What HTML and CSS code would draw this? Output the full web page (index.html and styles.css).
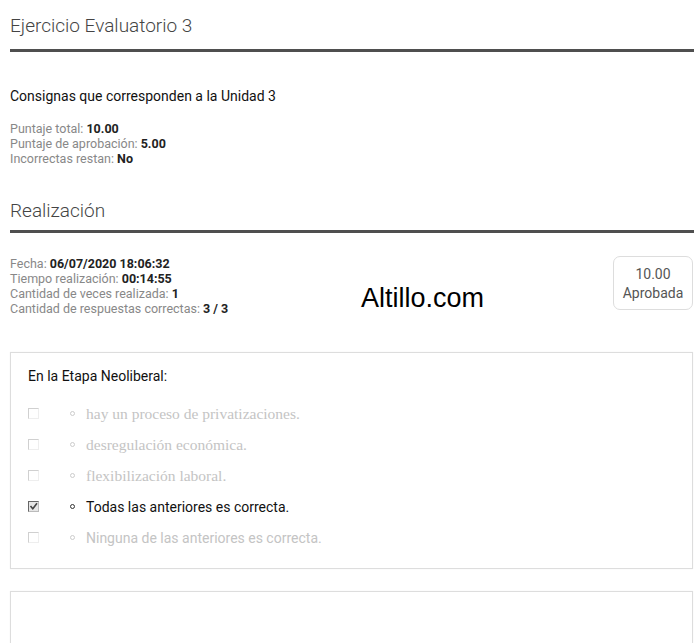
FILE: index.html
```html
<!DOCTYPE html>
<html lang="es">
<head>
    <meta charset="UTF-8">
    <meta name="viewport" content="width=device-width, initial-scale=1.0">
    <title>Ejercicio Evaluatorio 3</title>
    <link rel="stylesheet" href="styles.css">
</head>
<body>
    <div class="page">
        <h1 class="section-title">Ejercicio Evaluatorio 3</h1>

        <p class="consigna">Consignas que corresponden a la Unidad 3</p>
        <div class="info">
            <div>Puntaje total: <b>10.00</b></div>
            <div>Puntaje de aprobación: <b>5.00</b></div>
            <div>Incorrectas restan: <b>No</b></div>
        </div>

        <h2 class="section-title">Realización</h2>

        <div class="result">
            <div class="info">
                <div>Fecha: <b>06/07/2020 18:06:32</b></div>
                <div>Tiempo realización: <b>00:14:55</b></div>
                <div>Cantidad de veces realizada: <b>1</b></div>
                <div>Cantidad de respuestas correctas: <b>3 / 3</b></div>
            </div>
            <div class="badge">10.00<br>Aprobada</div>
            <span class="watermark">Altillo.com</span>
        </div>

        <div class="card">
            <h3>En la Etapa Neoliberal:</h3>
            <ul class="options">
                <li class="off serif"><span class="chk"></span><span class="dot"></span>hay un proceso de privatizaciones.</li>
                <li class="off serif"><span class="chk"></span><span class="dot"></span>desregulación económica.</li>
                <li class="off serif"><span class="chk"></span><span class="dot"></span>flexibilización laboral.</li>
                <li class="on"><span class="chk checked"><svg width="9" height="9" viewBox="0 0 9 9"><path d="M1.5 4 L3.8 6.8 L8 1.2" fill="none" stroke="#444" stroke-width="1.6"/></svg></span><span class="dot"></span>Todas las anteriores es correcta.</li>
                <li class="off"><span class="chk"></span><span class="dot"></span>Ninguna de las anteriores es correcta.</li>
            </ul>
        </div>

        <div class="card empty"></div>
    </div>
</body>
</html>
```

FILE: styles.css
```css
* { margin: 0; padding: 0; box-sizing: border-box; }
body { font-family: Roboto, 'Liberation Sans', Arial, sans-serif; background: #fff; color: #111; }
.page { padding: 0 6px 0 10px; }
.section-title { font-size: 19px; font-weight: 300; color: #444; height: 52px; padding-top: 14px; border-bottom: 3px solid #4f4f4f; }
.consigna { font-size: 14px; margin-top: 36px; }
.info { font-size: 12.5px; line-height: 15px; color: #888; }
.info b { color: #222; font-weight: 700; }
.page > .info { margin-top: 17px; margin-bottom: 19px; }
h2.section-title { height: 48px; padding-top: 14px; }
.result { position: relative; display: flex; justify-content: space-between; align-items: flex-start; padding-top: 23px; padding-bottom: 36px; }
.badge { width: 80px; height: 54px; border: 1px solid #ddd; border-radius: 7px; text-align: center; font-size: 14px; line-height: 19px; color: #555; padding-top: 8px; margin-right: 1px; margin-top: 0; }
.watermark { position: absolute; left: 351px; top: 50px; font-family: 'Liberation Sans', Arial, sans-serif; font-size: 27px; color: #000; }
.card { border: 1px solid #ddd; box-shadow: 0 0 1px rgba(0,0,0,0.08); padding: 15px 17px 15px; margin-right: 1px; }
.card h3 { font-size: 14px; font-weight: 400; color: #111; margin-bottom: 14px; }
.options { list-style: none; }
.options li { display: flex; align-items: center; height: 31px; font-size: 14px; }
.options li.serif { font-family: 'Liberation Serif', 'Times New Roman', serif; font-size: 15.5px; }
.off { color: #c4c4c4; }
.on { color: #111; }
.chk { width: 11px; height: 11px; border: 1px solid #d0d0d0; border-right-color: #eee; border-bottom-color: #eee; margin-right: 31px; display: inline-flex; align-items: center; justify-content: center; }
.chk.checked { border-color: #666; border-right-color: #bbb; border-bottom-color: #bbb; background: #e6e6e6; }
.chk svg { display: block; }
.dot { width: 5px; height: 5px; border: 1px solid #ccc; border-radius: 50%; margin-right: 11px; }
.on .dot { border-color: #333; }
.card.empty { margin-top: 22px; height: 80px; border-bottom: none; }
```
